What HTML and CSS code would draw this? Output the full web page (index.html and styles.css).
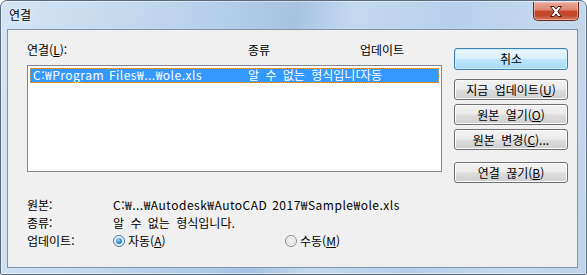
FILE: index.html
```html
<!DOCTYPE html>
<html lang="ko">
<head>
    <meta charset="UTF-8">
    <title>연결</title>
    <link rel="stylesheet" href="styles.css">
</head>
<body>
    <div class="window">
        <div class="titlebar">
            <span class="title">연결</span>
            <button class="close" type="button">
                <svg width="14" height="11" viewBox="0 0 14 11">
                    <path d="M1.5 0.5h3.5l2 2.6 2-2.6h3.5l-3.7 5 3.7 5h-3.5l-2-2.6-2 2.6h-3.5l3.7-5z" fill="#fff" stroke="#4a1a12" stroke-width="1" stroke-linejoin="round"/>
                </svg>
            </button>
        </div>

        <div class="client">
            <div class="top">
                <div class="links">
                    <div class="head">
                        <span class="h1">연결(<u>L</u>):</span>
                        <span class="h2">종류</span>
                        <span class="h3">업데이트</span>
                    </div>
                    <div class="listbox">
                        <div class="row selected">
                            <span class="c1 latin">C:₩Program Files₩...₩ole.xls</span>
                            <span class="c2">알 수 없는 형식입니다</span>
                            <span class="c3">자동</span>
                        </div>
                    </div>
                </div>

                <div class="buttons">
                    <button class="btn default" type="button">취소</button>
                    <button class="btn" type="button">지금 업데이트(<u>U</u>)</button>
                    <button class="btn" type="button">원본 열기(<u>O</u>)</button>
                    <button class="btn" type="button">원본 변경(<u>C</u>)...</button>
                    <button class="btn gap" type="button">연결 끊기(<u>B</u>)</button>
                </div>
            </div>

            <div class="info">
                <div class="info-row">
                    <span class="key">원본:</span>
                    <span class="latin">C:₩...₩Autodesk₩AutoCAD 2017₩Sample₩ole.xls</span>
                </div>
                <div class="info-row">
                    <span class="key">종류:</span>
                    <span>알 수 없는 형식입니다.</span>
                </div>
                <div class="info-row update">
                    <span class="key">업데이트:</span>
                    <label class="opt auto"><span class="radio on"></span><span>자동(<u>A</u>)</span></label>
                    <label class="opt"><span class="radio"></span><span>수동(<u>M</u>)</span></label>
                </div>
            </div>
        </div>
    </div>
</body>
</html>
```

FILE: styles.css
```css
body {
    margin: 0;
    width: 587px;
    height: 275px;
    overflow: hidden;
    font-family: "Noto Sans CJK KR", "DejaVu Sans", sans-serif;
    font-size: 12px;
    line-height: 14px;
    word-spacing: 3px;
    color: #000;
    background: #fff;
}
u {
    text-decoration: underline;
    text-underline-offset: 1px;
}
.latin {
    letter-spacing: 0.5px;
    word-spacing: 1px;
}
.window {
    box-sizing: border-box;
    width: 587px;
    height: 275px;
    border: 1px solid #5b6b7c;
    border-radius: 7px 7px 2px 2px;
    padding: 0 8px 6px 6px;
    display: flex;
    flex-direction: column;
    background: linear-gradient(100deg, #d4e4f4 0%, #c3d8ee 22%, #b1cce7 38%, #a7c3e2 47%, #c4d9ee 56%, #b7d0ea 72%, #c6daee 88%, #bdd3ea 100%);
    box-shadow: inset 0 0 0 1px rgba(255, 255, 255, 0.45);
}
.titlebar {
    height: 28px;
    display: flex;
    align-items: flex-start;
    flex-shrink: 0;
}
.title {
    padding: 7px 0 0 2px;
    color: #000;
    text-shadow: 0 0 6px rgba(255, 255, 255, 0.9);
}
.close {
    margin-left: auto;
    margin-right: -1px;
    margin-top: 1px;
    width: 46px;
    height: 19px;
    padding: 0;
    border: 1px solid #6b2b20;
    border-top: none;
    border-radius: 0 0 5px 5px;
    background: linear-gradient(#e9a99a 0%, #dd8571 45%, #c8462b 50%, #c44a2e 75%, #d8775b 100%);
    box-shadow: inset 0 0 0 1px rgba(255, 220, 210, 0.45);
    display: flex;
    align-items: center;
    justify-content: center;
}
.client {
    flex: 1;
    background: #f0f0f0;
    border: 1px solid #8193a6;
    padding: 13px 0 0 19px;
}
.top {
    display: flex;
    align-items: flex-start;
}
.links {
    width: 415px;
}
.head {
    display: flex;
    height: 14px;
    margin-bottom: 8px;
}
.h1 {
    width: 221px;
}
.h2 {
    width: 112px;
}
.listbox {
    box-sizing: border-box;
    height: 107px;
    border: 1px solid #828790;
    background: #fff;
    padding: 2px;
}
.row {
    display: flex;
    height: 15px;
    box-sizing: border-box;
    padding: 0 0 0 3px;
    line-height: 14px;
    white-space: nowrap;
}
.row.selected {
    background: #3399ff;
    color: #fff;
    outline: 1px dotted #f5a040;
    outline-offset: -1px;
}
.c1 {
    width: 215px;
    flex-shrink: 0;
}
.c2 {
    width: 112px;
    flex-shrink: 0;
    overflow: hidden;
}
.buttons {
    margin-left: 12px;
    margin-top: 5px;
    display: flex;
    flex-direction: column;
    gap: 4px;
}
.btn {
    box-sizing: border-box;
    width: 114px;
    height: 21px;
    padding: 0;
    font-family: inherit;
    font-size: 12px;
    line-height: 14px;
    word-spacing: 3px;
    color: #000;
    border: 1px solid #707070;
    border-radius: 3px;
    background: linear-gradient(#f2f2f2 0%, #ebebeb 48%, #dddddd 52%, #cfcfcf 100%);
    box-shadow: inset 0 0 0 1px #fcfcfc;
}
.btn.default {
    height: 22px;
    margin-bottom: 5px;
    border-color: #3c7fb1;
    background: linear-gradient(#eaf6fd 0%, #d9f0fc 48%, #bee6fd 52%, #a7d9f5 100%);
    box-shadow: inset 0 0 0 1px #c8ecfc;
}
.btn.gap {
    margin-top: 8px;
}
.info {
    margin-top: 15px;
}
.info-row {
    display: flex;
    height: 14px;
    margin-bottom: 4px;
    white-space: nowrap;
}
.info-row.update {
    margin-top: 4px;
    align-items: center;
}
.key {
    width: 86px;
    flex-shrink: 0;
}
.opt {
    display: flex;
    align-items: center;
    gap: 3px;
}
.opt.auto {
    width: 172px;
}
.radio {
    box-sizing: border-box;
    width: 12px;
    height: 12px;
    border-radius: 50%;
    border: 1px solid #8e8f8f;
    background: radial-gradient(circle at 50% 40%, #f4f4f4 0%, #e2e2e2 60%, #cfcfcf 100%);
    box-shadow: inset 0 0 0 1px #fafafa;
    display: flex;
    align-items: center;
    justify-content: center;
}
.radio.on {
    border-color: #3d7bad;
}
.radio.on::after {
    content: "";
    width: 6px;
    height: 6px;
    border-radius: 50%;
    background: radial-gradient(circle at 40% 35%, #9fd6f8 0%, #2a8ad4 55%, #124f8c 100%);
}
```
